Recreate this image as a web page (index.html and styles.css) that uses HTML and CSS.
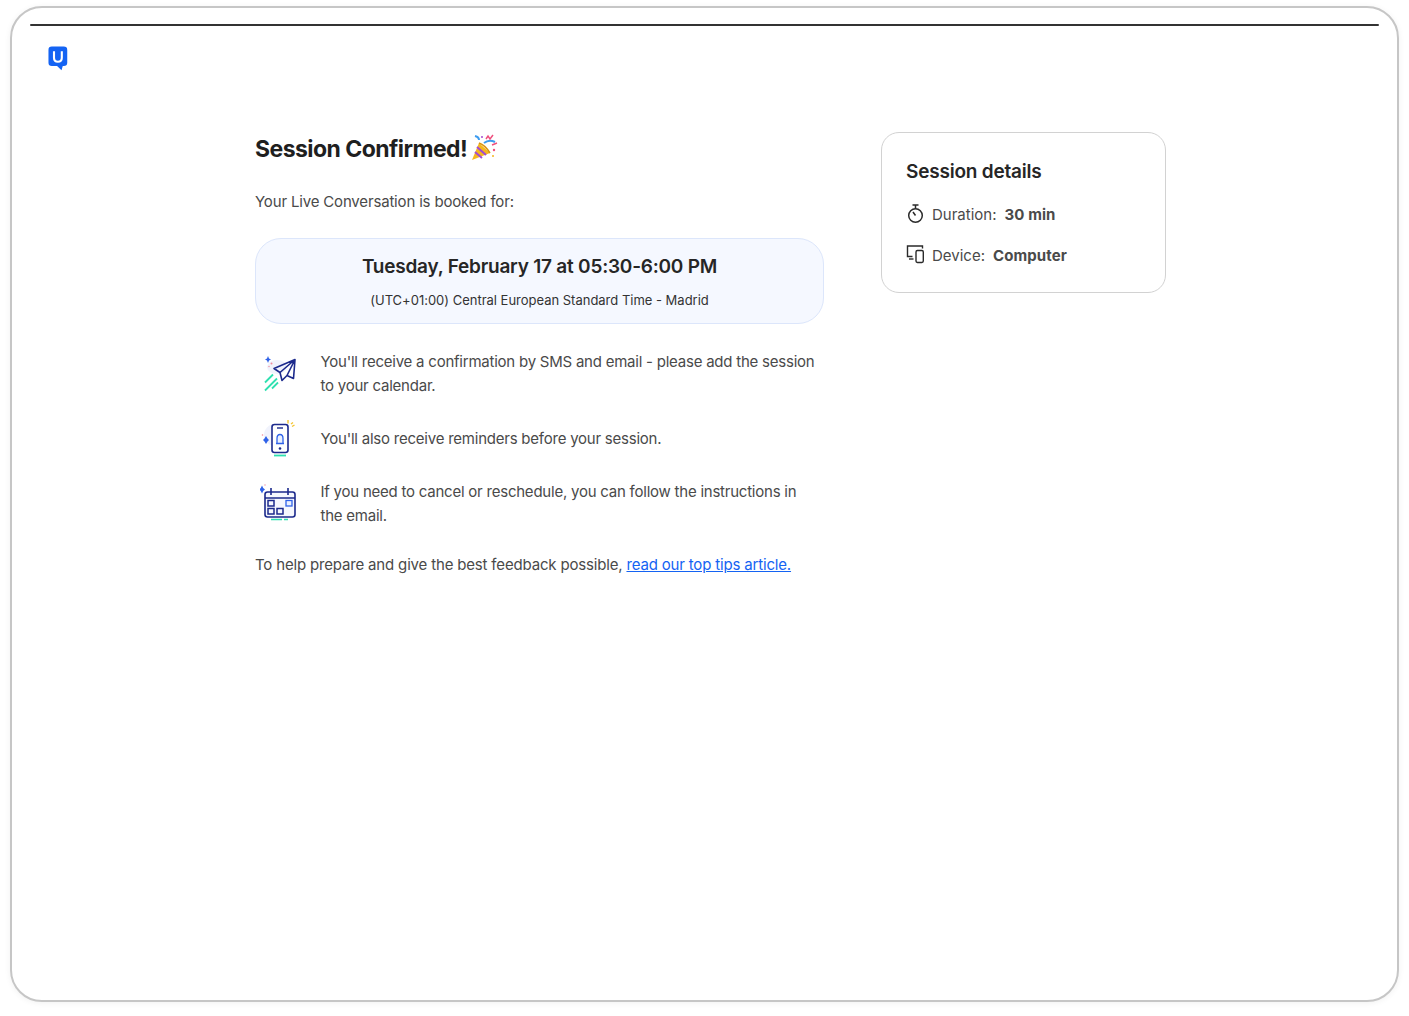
FILE: index.html
```html
<!DOCTYPE html>
<html lang="en">
<head>
<meta charset="utf-8">
<title>Session Confirmed</title>
<link rel="stylesheet" href="styles.css">
</head>
<body>
<div class="frame">
  <div class="topline"></div>
  <header class="logo-row">
    <svg class="logo" width="20" height="25" viewBox="0 0 21 26">
      <path d="M4 0.500H16.500Q20.200 0.500 20.200 4V17.500Q20.200 21 16.500 21H15.500L14.200 25.300L9.500 21H4Q0.500 21 0.500 17.500V4Q0.500 0.500 4 0.500Z" fill="#1463f3"/>
      <path d="M6.300 5.500V12.300Q6.300 16.400 10.400 16.400Q14.500 16.400 14.500 12.300V5.500" fill="none" stroke="#fff" stroke-width="2.200"/>
    </svg>
  </header>
  <main class="content">
    <section class="left">
      <h1 class="title">Session Confirmed!
        <svg class="popper" width="28" height="28" viewBox="0 0 28 28">
          <path d="M2 26L9 9L20 19Z" fill="#f5b71f"/>
          <path d="M5 18L12 24M7 13L16 21" stroke="#a24bd0" stroke-width="2" fill="none"/>
          <path d="M9 9Q15 11 20 19" stroke="#d8920f" stroke-width="1.500" fill="none"/>
          <path d="M14 9Q19 5 25 8" stroke="#3d9cf0" stroke-width="2" fill="none"/>
          <path d="M16 5L18 2L20 5L23 1M22 11L27 9" stroke="#ef4f7d" stroke-width="1.500" fill="none"/>
          <path d="M5 2Q9 3 9 6" stroke="#3d9cf0" stroke-width="2" fill="none"/>
          <circle cx="24" cy="16" r="1.200" fill="#ef4f7d"/><circle cx="23" cy="22" r="1" fill="#f5b71f"/><circle cx="12" cy="3" r="1" fill="#a24bd0"/>
        </svg>
      </h1>
      <p class="intro">Your Live Conversation is booked for:</p>
      <div class="when">
        <div class="when-main">Tuesday, February 17 at 05:30-6:00 PM</div>
        <div class="when-zone">(UTC+01:00) Central European Standard Time - Madrid</div>
      </div>
      <ul class="steps">
        <li class="step">
          <svg class="step-icon" width="40" height="40" viewBox="0 0 40 40">
            <ellipse cx="17" cy="13" rx="10" ry="7" fill="#f1f3fc"/>
            <path d="M8 2L9 4.500L11 5.500L9 6.500L8 9L7 6.500L5 5.500L7 4.500Z" fill="#2f62e8"/>
            <circle cx="11.500" cy="9.500" r="1" fill="#f08a9c"/><circle cx="9" cy="12.500" r=".7" fill="#f08a9c"/>
            <path d="M14 14.500L35 5.500L33.500 24.500L27 21.500L22 26.500L20 18.500ZM20 18.500L35 5.500L27 21.500" fill="none" stroke="#1c2a8c" stroke-width="1.600" stroke-linejoin="round"/>
            <path d="M5 28.500L13 20.500M5 36.500L17 24.500M12 34.500L18 28.500" stroke="#2fe0b0" stroke-width="1.800" fill="none"/>
          </svg>
          <p class="step-text">You'll receive a confirmation by SMS and email - please add the session to your calendar.</p>
        </li>
        <li class="step">
          <svg class="step-icon" width="40" height="40" viewBox="0 0 40 40">
            <circle cx="15" cy="16" r="11" fill="#f1f3fc"/>
            <rect x="12" y="5.500" width="16" height="28" rx="2.500" fill="#fff" stroke="#1c2a8c" stroke-width="1.600"/>
            <path d="M17 9H23" stroke="#1c2a8c" stroke-width="1.400"/>
            <path d="M17 24.500V19.500Q17 15.500 20 15.500Q23 15.500 23 19.500V24.500ZM16 24.500H24" fill="#eaf0fe" stroke="#2f62e8" stroke-width="1.300"/>
            <circle cx="20" cy="29.500" r="1.300" fill="#1c2a8c"/>
            <path d="M14 36.500H26" stroke="#2fe0b0" stroke-width="1.800"/>
            <path d="M6 17L7.500 19.500L9 21L7.500 22.500L6 25L4.500 22.500L3 21L4.500 19.500Z" fill="#2f62e8"/>
            <circle cx="2.500" cy="16" r=".8" fill="#f08a9c"/>
            <path d="M28 1V4.500M31 5L33 3.500M32 7.500L34.500 6" stroke="#f4c531" stroke-width="1.400"/>
          </svg>
          <p class="step-text">You'll also receive reminders before your session.</p>
        </li>
        <li class="step">
          <svg class="step-icon" width="40" height="40" viewBox="0 0 40 40">
            <rect x="5" y="8" width="30" height="25" rx="2.500" fill="#f6f8fe" stroke="#1c2a8c" stroke-width="1.600"/>
            <path d="M5 14H35M11 4V11M28 4V11" stroke="#1c2a8c" stroke-width="1.600" fill="none"/>
            <rect x="8" y="16.500" width="6" height="5.500" fill="none" stroke="#1c2a8c" stroke-width="1.500"/>
            <rect x="8" y="24.500" width="6" height="5.500" fill="none" stroke="#1c2a8c" stroke-width="1.500"/>
            <rect x="17" y="24.500" width="6" height="5.500" fill="none" stroke="#1c2a8c" stroke-width="1.500"/>
            <rect x="26" y="16.500" width="6" height="5.500" fill="#eaf0fe" stroke="#2f62e8" stroke-width="1.300"/>
            <path d="M11 35.500H22M24 35.500H28" stroke="#2fe0b0" stroke-width="1.600"/>
            <path d="M2 1.500L3.200 4L5 5.500L3.200 7L2 9.500L0.800 7L-1 5.500L0.800 4Z" fill="#2f62e8"/>
            <circle cx="5" cy="1" r=".7" fill="#f08a9c"/>
          </svg>
          <p class="step-text">If you need to cancel or reschedule, you can follow the instructions in the email.</p>
        </li>
      </ul>
      <p class="tips">To help prepare and give the best feedback possible, <a class="tips-link" href="#">read our top tips article.</a></p>
    </section>
    <aside class="details">
      <h2 class="details-title">Session details</h2>
      <div class="detail">
        <svg class="detail-icon" width="18" height="20" viewBox="0 0 18 20">
          <circle cx="9.500" cy="11.500" r="6.800" fill="none" stroke="#2a2a2a" stroke-width="1.500"/>
          <path d="M6.500 1H12.500M9.500 1V4.500M9.500 11.500L7 8" fill="none" stroke="#2a2a2a" stroke-width="1.500"/>
        </svg>
        <span class="detail-label">Duration:</span><b class="detail-value">30 min</b>
      </div>
      <div class="detail">
        <svg class="detail-icon" width="18" height="20" viewBox="0 0 18 20">
          <path d="M6.500 11.500H1.500V1H16.500V3.500" fill="none" stroke="#2a2a2a" stroke-width="1.400"/>
          <path d="M3 14H7.500" stroke="#2a2a2a" stroke-width="1.400"/>
          <rect x="10" y="5.500" width="7.300" height="12" rx="1.400" fill="none" stroke="#2a2a2a" stroke-width="1.400"/>
        </svg>
        <span class="detail-label">Device:</span><b class="detail-value">Computer</b>
      </div>
    </aside>
  </main>
</div>
</body>
</html>
```

FILE: styles.css
```css
* { box-sizing: border-box; }
html, body { margin: 0; padding: 0; background: #fff; }
body {
  padding: 6px 10px 14px 10px;
  font-family: "Inter", "Liberation Sans", sans-serif;
  font-variant-ligatures: none;
  color: #4a4a4a;
}
.frame {
  width: 1389px;
  height: 996px;
  border: 2px solid #c6c6c6;
  border-radius: 32px;
  box-shadow: 0 1px 6px rgba(0,0,0,.06);
  padding: 16px 18px 0 18px;
  background: #fff;
}
.topline { height: 2px; background: #333; border-radius: 1px; }
.logo-row { padding: 20px 0 0 18px; height: 82px; }
.logo { display: block; }
.content { display: flex; align-items: flex-start; padding-left: 225px; padding-top: 24px; gap: 57px; }
.left { width: 569px; }
.title { margin: 1px 0 0; font-size: 23px; letter-spacing: -.55px; line-height: 32px; font-weight: 700; color: #1f1f1f; display: flex; align-items: center; gap: 3px; }
.popper { display: block; margin-top: -3px; }
.intro { margin: 25px 0 0; font-size: 15px; letter-spacing: -.17px; line-height: 24px; }
.when {
  margin-top: 24px;
  height: 86px;
  border: 1px solid #dce6fb;
  border-radius: 26px;
  background: #f5f8ff;
  text-align: center;
  padding-top: 15px;
}
.when-main { font-size: 19px; letter-spacing: -.22px; line-height: 26px; font-weight: 600; color: #262626; }
.when-zone { margin-top: 10px; font-size: 13px; letter-spacing: -.01px; line-height: 20px; color: #333; }
.steps { list-style: none; margin: 25.500px 0 0; padding: 0; display: flex; flex-direction: column; gap: 20.500px; }
.step { display: flex; align-items: center; gap: 24.500px; }
.step-icon { display: block; flex: none; margin-left: 5px; margin-right: -4px; }
.step-text { margin: 0; padding-right: 6px; font-size: 15px; letter-spacing: -.23px; line-height: 24.500px; flex: 1; min-width: 0; }
.tips { margin: 24.500px 0 0; font-size: 15px; letter-spacing: -.17px; line-height: 24px; }
.tips-link { color: #1463f3; }
.details {
  width: 285px;
  height: 161px;
  border: 1px solid #d2d2d2;
  border-radius: 18px;
  padding: 25px 24px 24px;
}
.details-title { margin: 0; font-size: 19px; letter-spacing: -.2px; line-height: 28px; font-weight: 600; color: #262626; }
.detail { display: flex; align-items: center; height: 24px; margin-top: 17px; font-size: 15px; }
.details-title + .detail { margin-top: 16px; }
.detail-icon { flex: none; margin-right: 8px; }
.detail-value { margin-left: 8px; font-weight: 700; letter-spacing: .1px; }
```
